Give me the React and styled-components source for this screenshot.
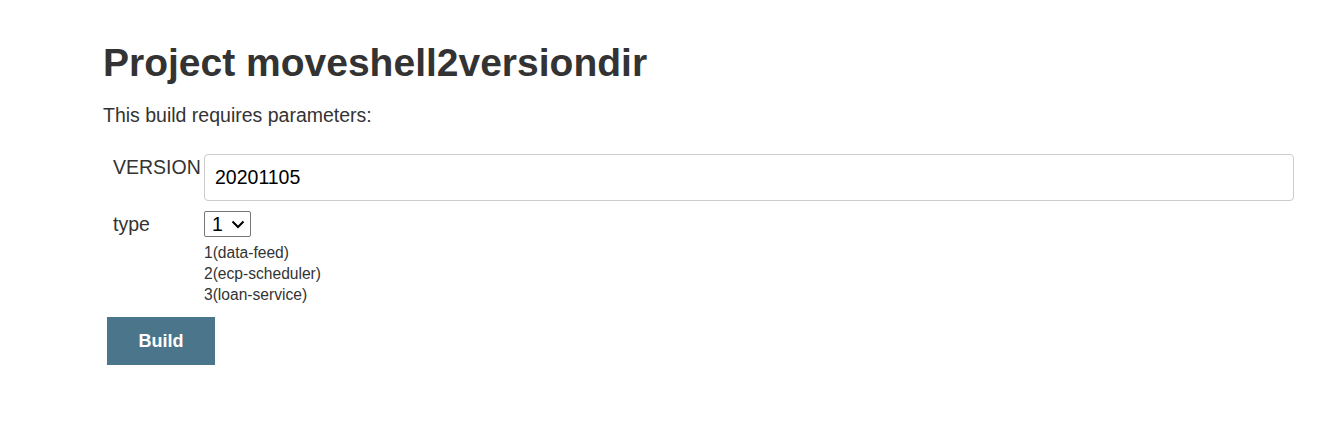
import React from "react";
import styled, { createGlobalStyle } from "styled-components";

const Global = createGlobalStyle`
  html, body {
    margin: 0;
    padding: 0;
    background: #fff;
  }
  body {
    font-family: "Liberation Sans", Arial, Helvetica, sans-serif;
    color: #333;
  }
`;

const Page = styled.div`
  padding: 36px 0 0 103px;
  width: 1191px;
`;

const Title = styled.h1`
  margin: 0;
  font-size: 39px;
  font-weight: bold;
  line-height: 53px;
  color: #333;
`;

const Intro = styled.p`
  margin: 14px 0 0;
  font-size: 19.5px;
  line-height: 24px;
`;

const Params = styled.div`
  display: grid;
  grid-template-columns: 91px 1fr;
  row-gap: 10px;
  margin-top: 27px;
  padding-left: 10px;
`;

const Label = styled.div`
  font-size: 19.5px;
  line-height: 22px;
  padding-top: ${(p) => p.$top || 0}px;
  white-space: nowrap;
`;

const Field = styled.div`
  display: flex;
  flex-direction: column;
  align-items: flex-start;
`;

const TextInput = styled.input`
  box-sizing: border-box;
  width: 100%;
  height: 47px;
  border: 1px solid #ccc;
  border-radius: 4px;
  padding: 0 10px;
  font-family: inherit;
  font-size: 19.5px;
  color: #000;
  outline: none;
`;

const SelectBox = styled.div`
  display: flex;
  align-items: center;
  gap: 8px;
  box-sizing: border-box;
  height: 26px;
  padding: 0 5px 0 7px;
  border: 1px solid #767676;
  border-radius: 2px;
  font-size: 19.5px;
  color: #000;
`;

const Desc = styled.div`
  margin-top: 5px;
  font-size: 15.6px;
  line-height: 21px;
  color: #333;
`;

const BuildButton = styled.button`
  margin: 12px 0 0 4px;
  width: 108px;
  height: 48px;
  border: none;
  background: #4b758b;
  color: #fff;
  font-family: inherit;
  font-size: 18px;
  font-weight: bold;
  cursor: pointer;
`;

const Chevron = () => (
  <svg width="14" height="9" viewBox="0 0 14 9" fill="none">
    <path d="M1.5 1.5 L7 7 L12.5 1.5" stroke="#000" strokeWidth="2" />
  </svg>
);

export default function App() {
  return (
    <>
      <Global />
      <Page>
        <Title>Project moveshell2versiondir</Title>
        <Intro>This build requires parameters:</Intro>
        <Params>
          <Label $top={2}>VERSION</Label>
          <Field>
            <TextInput defaultValue="20201105" />
          </Field>
          <Label $top={2}>type</Label>
          <Field>
            <SelectBox>
              <span>1</span>
              <Chevron />
            </SelectBox>
            <Desc>
              1(data-feed)
              <br />
              2(ecp-scheduler)
              <br />
              3(loan-service)
            </Desc>
          </Field>
        </Params>
        <BuildButton>Build</BuildButton>
      </Page>
    </>
  );
}
